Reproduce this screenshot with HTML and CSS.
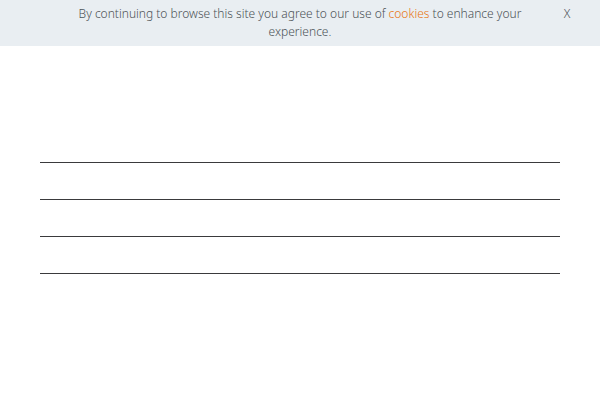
FILE: index.html
```html
<!DOCTYPE html>
<html lang="en">
<head>
<meta charset="utf-8">
<meta name="viewport" content="width=device-width, initial-scale=1">
<title>Cookies</title>
<link rel="stylesheet" href="styles.css">
</head>
<body>
<div class="notice">
  <p class="notice-text">By continuing to browse this site you agree to our use of <a href="#">cookies</a> to enhance your experience.</p>
  <button class="notice-close" type="button">X</button>
</div>
<main class="content">
  <hr class="rule">
  <hr class="rule">
  <hr class="rule">
  <hr class="rule">
</main>
</body>
</html>
```
FILE: styles.css
```css
body {
  margin: 0;
  background: #fff;
  color: #4c5256;
  font: 300 12px/18px "Noto Sans", "Open Sans", sans-serif;
}

.notice {
  display: grid;
  grid-template-columns: 1fr 26px;
  align-items: start;
  padding: 5px 20px;
  background: #e9eef2;
}

.notice-text {
  margin: 0;
  padding: 0 28px 0 54px;
  text-align: center;
}

.notice-text a {
  color: #e87511;
  text-decoration: none;
}

.notice-close {
  margin: 0;
  padding: 0;
  border: 0;
  background: none;
  color: inherit;
  font: inherit;
  cursor: pointer;
}

.content {
  display: grid;
  gap: 36px;
  padding: 116px 40px;
}

.rule {
  width: 100%;
  height: 1px;
  margin: 0;
  border: 0;
  background: #3a3a3c;
}
```
